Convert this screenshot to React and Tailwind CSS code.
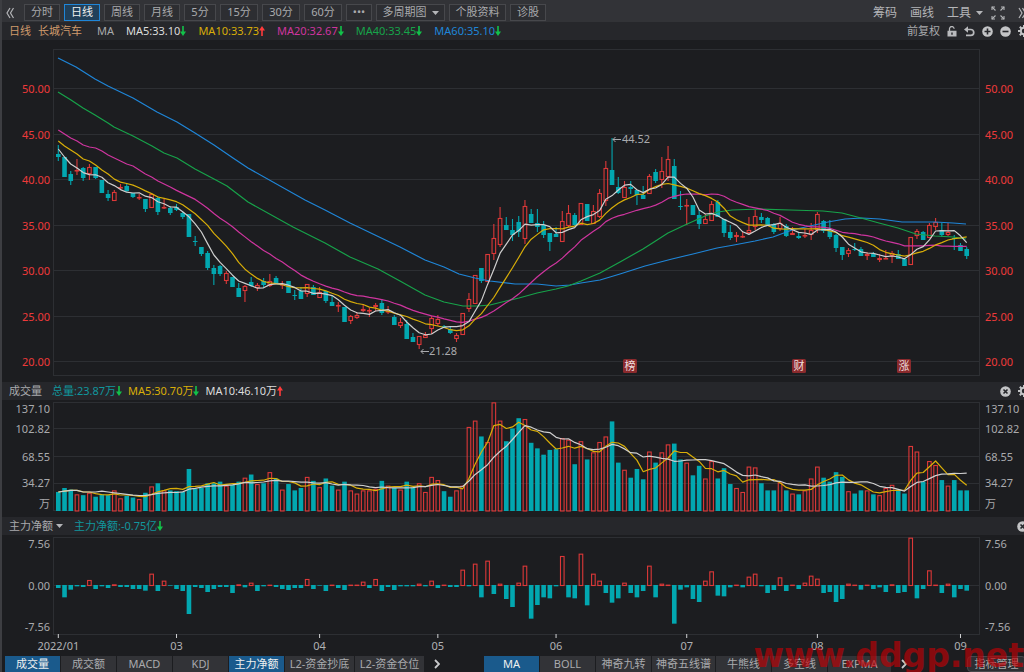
import React, { useState } from 'react';

// One candle per trading day: [high, body top, body bottom, low, direction], y in chart units
const candles = [
  [145, 154, 157, 161, 'd'], [157, 157, 177, 177, 'd'], [171, 174, 181, 185, 'd'], [159, 170, 171, 175, 'u'],
  [167, 168, 178, 181, 'd'], [164, 167, 174, 180, 'u'], [167, 167, 178, 179, 'd'], [180, 180, 193, 193, 'd'],
  [190, 194, 198, 201, 'd'], [190, 192, 201, 201, 'u'], [184, 187, 188, 190, 'u'], [184, 186, 191, 192, 'd'],
  [193, 193, 197, 198, 'd'], [194, 197, 198, 200, 'u'], [199, 199, 209, 212, 'd'], [193, 194, 208, 208, 'u'],
  [196, 198, 212, 215, 'd'], [199, 207, 208, 209, 'u'], [206, 208, 213, 215, 'd'], [204, 207, 210, 211, 'd'],
  [212, 213, 217, 219, 'd'], [214, 214, 237, 237, 'd'], [236, 241, 242, 246, 'd'], [247, 247, 254, 256, 'd'],
  [251, 253, 268, 270, 'd'], [265, 268, 274, 285, 'd'], [265, 266, 274, 276, 'd'], [271, 273, 281, 284, 'u'],
  [277, 277, 287, 287, 'd'], [283, 288, 297, 297, 'd'], [285, 286, 291, 302, 'u'], [277, 282, 286, 287, 'd'],
  [283, 285, 288, 291, 'u'], [278, 281, 285, 288, 'd'], [274, 281, 286, 287, 'u'], [276, 278, 283, 283, 'd'],
  [281, 284, 285, 289, 'u'], [281, 281, 293, 293, 'd'], [290, 295, 296, 300, 'd'], [287, 291, 299, 299, 'd'],
  [284, 284, 294, 297, 'u'], [285, 287, 295, 295, 'd'], [287, 292, 298, 298, 'u'], [291, 291, 301, 303, 'd'],
  [296, 302, 306, 306, 'd'], [302, 305, 306, 312, 'u'], [307, 307, 322, 322, 'd'], [315, 316, 321, 324, 'u'],
  [312, 315, 318, 319, 'u'], [304, 309, 311, 312, 'u'], [308, 310, 311, 317, 'u'], [303, 305, 307, 311, 'u'],
  [299, 303, 313, 315, 'd'], [306, 311, 312, 314, 'u'], [315, 317, 325, 325, 'd'], [318, 322, 326, 328, 'u'],
  [320, 324, 339, 339, 'd'], [333, 337, 342, 342, 'd'], [336, 336, 345, 349, 'u'], [332, 335, 338, 338, 'u'],
  [316, 318, 329, 334, 'u'], [315, 319, 324, 326, 'u'], [325, 326, 328, 328, 'd'], [326, 329, 333, 334, 'd'],
  [333, 335, 339, 342, 'u'], [313, 313, 335, 335, 'u'], [293, 299, 309, 312, 'u'], [275, 275, 304, 304, 'u'],
  [268, 268, 281, 283, 'd'], [254, 254, 282, 282, 'u'], [224, 238, 254, 260, 'u'], [207, 218, 245, 247, 'u'],
  [217, 225, 230, 230, 'd'], [219, 230, 235, 241, 'd'], [216, 222, 232, 237, 'd'], [200, 206, 239, 244, 'u'],
  [209, 214, 223, 223, 'd'], [209, 223, 227, 232, 'd'], [221, 225, 235, 238, 'd'], [233, 233, 242, 251, 'd'],
  [227, 234, 237, 237, 'd'], [211, 221, 242, 242, 'u'], [205, 213, 226, 227, 'u'], [213, 215, 225, 226, 'd'],
  [203, 203, 225, 225, 'u'], [204, 204, 221, 221, 'd'], [205, 211, 224, 224, 'u'], [189, 193, 217, 218, 'u'],
  [161, 168, 201, 206, 'u'], [138, 170, 185, 185, 'd'], [177, 187, 193, 194, 'd'], [181, 187, 198, 198, 'u'],
  [181, 187, 189, 194, 'd'], [190, 190, 195, 205, 'd'], [186, 195, 199, 199, 'd'], [174, 176, 194, 194, 'u'],
  [169, 172, 181, 183, 'd'], [157, 171, 180, 188, 'u'], [146, 159, 177, 181, 'u'], [159, 166, 199, 199, 'd'],
  [191, 206, 207, 210, 'd'], [199, 205, 206, 225, 'u'], [205, 205, 215, 215, 'd'], [210, 215, 224, 229, 'd'],
  [214, 219, 224, 224, 'u'], [201, 204, 221, 221, 'u'], [200, 202, 217, 217, 'd'], [219, 219, 233, 237, 'd'],
  [225, 232, 238, 240, 'd'], [232, 235, 237, 242, 'u'], [232, 236, 237, 238, 'u'], [217, 230, 233, 234, 'u'],
  [210, 216, 227, 230, 'u'], [213, 217, 220, 223, 'd'], [217, 218, 225, 225, 'd'], [223, 224, 232, 234, 'd'],
  [217, 223, 229, 231, 'u'], [224, 226, 236, 237, 'd'], [227, 233, 235, 235, 'u'], [232, 236, 238, 239, 'd'],
  [229, 235, 236, 238, 'u'], [223, 230, 235, 240, 'u'], [212, 214, 230, 233, 'u'], [220, 221, 231, 233, 'd'],
  [220, 231, 237, 239, 'd'], [234, 235, 248, 252, 'd'], [247, 247, 255, 260, 'd'], [248, 250, 254, 257, 'u'],
  [243, 249, 250, 251, 'd'], [247, 249, 256, 256, 'd'], [252, 254, 256, 260, 'u'], [252, 254, 257, 257, 'd'],
  [254, 258, 260, 262, 'u'], [250, 258, 259, 259, 'u'], [251, 253, 256, 263, 'u'], [250, 254, 259, 259, 'd'],
  [258, 259, 266, 266, 'd'], [237, 237, 265, 265, 'u'], [229, 231, 236, 239, 'u'], [231, 232, 240, 240, 'd'],
  [223, 225, 238, 238, 'u'], [218, 222, 227, 230, 'u'], [223, 230, 235, 237, 'd'], [223, 232, 235, 236, 'u'],
  [235, 238, 239, 250, 'd'], [243, 245, 251, 251, 'd'], [247, 249, 256, 259, 'd'],
];

// Daily volume
const volumes = [
  24, 29, 27, 21, 20, 23, 18, 21, 20, 26, 16, 19, 17, 15, 23, 31, 35, 26, 26, 25, 24, 53, 28, 29, 35, 35, 37, 32, 33, 37,
  42, 46, 34, 35, 49, 41, 27, 34, 26, 29, 43, 38, 30, 41, 32, 27, 37, 26, 22, 26, 26, 28, 38, 32, 29, 27, 37, 30, 35, 24,
  43, 39, 25, 18, 26, 32, 106, 114, 94, 87, 137, 114, 88, 104, 117, 116, 86, 79, 71, 77, 78, 92, 90, 59, 88, 65, 74, 87,
  94, 113, 61, 52, 42, 53, 40, 75, 61, 74, 84, 85, 65, 61, 45, 57, 41, 63, 41, 54, 34, 29, 24, 56, 55, 35, 26, 26, 36, 26,
  22, 21, 26, 41, 56, 42, 37, 49, 43, 25, 22, 26, 26, 21, 20, 29, 33, 27, 22, 82, 75, 37, 63, 58, 39, 32, 39, 26, 26,
];

// Net inflow of the main funds
const flows = [
  -9, -37, -14, -4, -6, 18, -12, -4, -9, 5, -6, -6, -12, -12, -17, 37, -18, 16, -2, -12, -18, -87, -6, -9, -21, -12, -6,
  -6, -24, 5, -7, 10, -18, -4, 2, -6, -12, -15, -9, -9, 21, -12, -2, -18, 4, -9, -15, 4, 4, 13, -9, 21, -18, -6, -15, -4,
  -4, -4, 7, -4, 16, -9, 4, -6, -6, 49, -4, 67, -37, 76, -27, 7, -42, -66, 10, 61, -101, -60, -37, -40, -4, 90, -37, -40,
  97, -61, 37, 16, -24, -53, -40, 10, -24, -37, -18, 61, -37, 7, 4, -116, -14, -7, -42, -51, 16, 44, -32, -34, -7, 4, -7,
  28, 37, -4, -24, -15, 26, -18, 2, -12, 10, 31, 22, -24, -21, -51, -42, 7, 2, -14, 2, -12, -7, -21, 5, -24, -21, 145,
  -40, -12, 47, 4, -24, 7, -37, -12, -17,
];

// Averages of the first days, where the series has no history of its own
const ma5Head = [149, 157, 164, 168];
const ma10Head = [141, 146, 150, 154, 159, 161, 165, 170, 174];
const ma20Head = [130, 134, 138, 141, 145, 147, 148, 151, 155, 158, 161, 164, 166, 170, 174, 177, 181, 184, 187];

const ma40Line =
  '58,92 71,100 83,108 95,115 108,123 114,127 133,136 152,146 164,153 177,158 195,169 214,179 227,186 248,202 293,227 307,234 325,243 350,257 378,269 400,281 425,295 444,302 463,306 478,306 490,305 506,301 519,298 537,293 556,289 568,286 581,281 600,273 620,262 643,249 654,242 668,233 685,225 705,216 718,212 732,210 760,209 790,210 823,211 842,213 861,218 879,223 898,228 916,234 935,236 953,237 966,239';
const ma60Line =
  '58,58 76,67 95,79 108,86 133,98 157,112 177,122 195,133 214,145 233,158 248,168 305,200 325,210 350,223 375,235 400,247 425,260 444,267 459,274 475,278 490,281 515,284 537,284 556,286 570,285 581,283 600,280 620,274 645,266 672,259 693,254 717,248 734,245 755,241 773,237 792,230 810,226 828,222 845,219 862,218 880,219 902,222 935,222 953,223 966,224';

const periods = [
  { name: '分时', width: 'w-9' },
  { name: '日线', width: 'w-9' },
  { name: '周线', width: 'w-9' },
  { name: '月线', width: 'w-9' },
  { name: '5分', width: 'w-8' },
  { name: '15分', width: 'w-[38px]' },
  { name: '30分', width: 'w-[38px]' },
  { name: '60分', width: 'w-[38px]' },
  { name: '•••', width: 'w-[26px]' },
  { name: '多周期图', width: 'w-[69px]', menu: true },
  { name: '个股资料', width: 'w-[57px]' },
  { name: '诊股', width: 'w-9' },
];

const months = [
  [0, '2022/01'], [19, '03'], [42, '04'], [61, '05'], [80, '06'], [101, '07'], [122, '08'], [145, '09'],
];

const priceLabels = ['50.00', '45.00', '40.00', '35.00', '30.00', '25.00', '20.00'];
const volumeLabels = ['137.10', '102.82', '68.55', '34.27', '万'];
const flowLabels = ['7.56', '0.00', '-7.56'];

const RED = '#dc3838';
const TEAL = '#02a7b0';

const dayX = (i) => 58.3 + i * 6.222;
const volumeY = (v) => 511 - v * 0.793;

// Moving average over n days
const average = (values, n, head) =>
  values.map((_, i) => {
    if (i < n - 1) return head[i];
    return values.slice(i - n + 1, i + 1).reduce((a, b) => a + b, 0) / n;
  });

const toPoints = (ys) => ys.map((y, i) => `${dayX(i).toFixed(1)},${y.toFixed(1)}`).join(' ');

const closes = candles.map((c) => (c[4] === 'u' ? c[1] : c[2]));
const volumeHead = [24, 25, 26, 26, 24, 24, 24, 25, 24];

function Arrow({ up }) {
  return (
    <svg width="6" height="10" viewBox="0 0 6 10" className="shrink-0">
      {up ? (
        <path d="M2.2 10V4.5H0L3 0l3 4.5H3.8V10z" fill="#ff3b3b" />
      ) : (
        <path d="M2.2 0v5.5H0L3 10l3-4.5H3.8V0z" fill="#12c24a" />
      )}
    </svg>
  );
}

function Caret() {
  return (
    <svg width="7" height="4" viewBox="0 0 7 4" className="shrink-0">
      <path d="M0 0h7L3.5 4z" fill="#b4b5b8" />
    </svg>
  );
}

function Chevrons({ left }) {
  return (
    <svg width="8" height="12" viewBox="0 0 8 12" fill="none" stroke="#b4b5b8" strokeWidth="1.2">
      <path d={left ? 'M4 1L1 6l3 5M7.500 1l-3 5 3 5' : 'M1 1l3 5-3 5M4.500 1l3 5-3 5'} />
    </svg>
  );
}

function Next() {
  return (
    <svg width="6" height="10" viewBox="0 0 6 10" fill="none" stroke="#c9cacc" strokeWidth="1.8">
      <path d="M1 1l4 4-4 4" />
    </svg>
  );
}

function Expand() {
  return (
    <svg width="14" height="14" viewBox="0 0 14 14" fill="none" stroke="#b4b5b8" strokeWidth="1.1">
      <path d="M1 4V1h3M10 1h3v3M13 10v3h-3M4 13H1v-3" />
      <path d="M1 1l3.500 3.500M13 1L9.500 4.500M13 13L9.500 9.500M1 13l3.500-3.500" />
    </svg>
  );
}

function Lock() {
  return (
    <svg width="10" height="11" viewBox="0 0 10 11">
      <path d="M2.500 5V3a2.300 2.300 0 0 1 4.600-.3" fill="none" stroke="#b9babd" strokeWidth="1.300" />
      <path d="M.5 4.800h9V10.500h-9zM4.300 6.600v2.200h1.400V6.600z" fill="#b9babd" fillRule="evenodd" />
    </svg>
  );
}

function Undo() {
  return (
    <svg width="11" height="11" viewBox="0 0 11 11">
      <path d="M2.500 3.500h4.300a2.900 2.900 0 0 1 0 5.900H2" fill="none" stroke="#b9babd" strokeWidth="1.700" />
      <path d="M0 3.500L4 .3v6.400z" fill="#b9babd" />
    </svg>
  );
}

function Round({ d }) {
  return (
    <svg width="11" height="11" viewBox="0 0 11 11">
      <circle cx="5.500" cy="5.500" r="5.300" fill="#c3c4c6" />
      <path d={d} fill="none" stroke="#26272b" strokeWidth="1.600" />
    </svg>
  );
}

function Gear() {
  return (
    <svg width="12" height="12" viewBox="0 0 12 12" fill="none" stroke="#c3c4c6">
      <circle cx="6" cy="6" r="3.200" strokeWidth="2" />
      <path
        d="M6 0v2.500M6 9.500V12M0 6h2.500M9.500 6H12M1.800 1.800l1.700 1.700M8.500 8.500l1.700 1.700M10.200 1.800L8.500 3.500M3.500 8.500l-1.700 1.700"
        strokeWidth="2"
      />
    </svg>
  );
}

function IconButton({ label, children }) {
  return (
    <button type="button" aria-label={label} className="flex shrink-0 items-center">
      {children}
    </button>
  );
}

function Reading({ color, up, children }) {
  return (
    <span className={`flex items-center ${color}`}>
      {children}
      <Arrow up={up} />
    </span>
  );
}

function Line({ points, color }) {
  return <polyline points={points} fill="none" stroke={color} strokeWidth="1.2" strokeLinejoin="round" />;
}

function Tag({ x, children }) {
  return (
    <g>
      <rect x={x - 7} y="359" width="14" height="14" rx="1.500" fill="#8a2a2d" />
      <text x={x} y="370" textAnchor="middle" fontSize="11" fill="#f0dede">{children}</text>
    </g>
  );
}

function PriceChart() {
  return (
    <svg viewBox="53 40 927 342" preserveAspectRatio="none" className="h-[342px] min-w-0 flex-1">
      <rect x="53.5" y="49.5" width="926" height="326" fill="none" stroke="#2d2f33" />
      {priceLabels.map((label, i) => (
        <path key={label} d={`M54 ${88.5 + Math.round(i * 45.5)}h925`} stroke="#2d2f33" />
      ))}
      {candles.map(([high, top, bottom, low, dir], i) => {
        const x = dayX(i);
        const h = Math.max(bottom - top, 1);
        return dir === 'u' ? (
          <g key={i} stroke={RED} strokeWidth="1.1" fill="none">
            <path d={`M${x} ${high}V${top}M${x} ${bottom}V${low}`} />
            <rect x={x - 1.8} y={top + 0.5} width="3.6" height={Math.max(h - 1, 0.5)} />
          </g>
        ) : (
          <g key={i} fill={TEAL}>
            <path d={`M${x} ${high}V${low}`} stroke={TEAL} strokeWidth="1.1" />
            <rect x={x - 2.3} y={top} width="4.6" height={h} />
          </g>
        );
      })}
      <Line points={ma60Line} color="#1f86d8" />
      <Line points={ma40Line} color="#17a34a" />
      <Line points={toPoints(average(closes, 20, ma20Head))} color="#cf359f" />
      <Line points={toPoints(average(closes, 10, ma10Head))} color="#d9ae08" />
      <Line points={toPoints(average(closes, 5, ma5Head))} color="#cfcfcf" />
      <g fill="#a9aaad" stroke="none" fontSize="11">
        <path d="M613 139.500h8M615.500 137l-2.500 2.500 2.500 2.500M421 351.500h8M423.500 349l-2.500 2.500 2.500 2.500" fill="none" stroke="#a9aaad" />
        <text x="622" y="143">44.52</text>
        <text x="429" y="355">21.28</text>
      </g>
      <Tag x={630}>榜</Tag>
      <Tag x={799}>财</Tag>
      <Tag x={904}>涨</Tag>
    </svg>
  );
}

function VolumeChart() {
  return (
    <svg viewBox="53 400 927 117" preserveAspectRatio="none" className="h-[117px] min-w-0 flex-1">
      <rect x="53.5" y="402.5" width="926" height="108" fill="none" stroke="#2d2f33" />
      <path d="M54 428.500h925M54 456.500h925M54 483.500h925" stroke="#2d2f33" />
      {volumes.map((v, i) => {
        const x = dayX(i);
        const y = volumeY(v);
        return candles[i][4] === 'u' ? (
          <rect key={i} x={x - 1.8} y={y + 0.5} width="3.6" height={510.5 - y} fill="none" stroke={RED} strokeWidth="1.1" />
        ) : (
          <rect key={i} x={x - 2.3} y={y} width="4.6" height={511 - y} fill={TEAL} />
        );
      })}
      <Line points={toPoints(average(volumes, 5, volumeHead).map(volumeY))} color="#d9ae08" />
      <Line points={toPoints(average(volumes, 10, volumeHead).map(volumeY))} color="#cfcfcf" />
    </svg>
  );
}

function FlowChart() {
  return (
    <svg viewBox="53 535 927 120" preserveAspectRatio="none" className="h-[120px] min-w-0 flex-1 overflow-visible">
      <rect x="53.5" y="537.5" width="926" height="97" fill="none" stroke="#2d2f33" />
      <path d="M54 585.500h925" stroke="#2d2f33" />
      {flows.map((v, i) => {
        const x = dayX(i);
        return v > 0 ? (
          <rect key={i} x={x - 1.8} y={585.5 - Math.max(v / 3 - 1, 0.3)} width="3.6" height={Math.max(v / 3 - 1, 0.3)} fill="none" stroke={RED} strokeWidth="1.1" />
        ) : (
          <rect key={i} x={x - 2.3} y="585" width="4.6" height={-v / 3} fill={TEAL} />
        );
      })}
      {months.map(([i, name]) => (
        <g key={name}>
          <path d={`M${dayX(i)} 634v4`} stroke="#d0d1d3" />
          <text x={dayX(i)} y="650" textAnchor="middle" fontSize="11" fill="#b0b1b4">{name}</text>
        </g>
      ))}
    </svg>
  );
}

function Axis({ labels, right, className }) {
  return (
    <div className={`shrink-0 leading-4 ${right ? 'w-11 pl-[5px] text-left' : 'w-[51px] pr-[3px] text-right'} ${className}`}>
      {labels.map((label) => (
        <div key={label}>{label}</div>
      ))}
    </div>
  );
}

function Tab({ name, width, active, onClick }) {
  return (
    <button
      type="button"
      onClick={onClick}
      className={`h-4 shrink-0 whitespace-nowrap ${width} ${active ? 'bg-[#1a5a8c] text-[#f0f0f0]' : 'bg-[#323337] text-[#a9aaad]'}`}
    >
      {name}
    </button>
  );
}

const lowerTabs = [
  ['成交量', 'w-[55px]'], ['成交额', 'w-[55px]'], ['MACD', 'w-[55px]'], ['KDJ', 'w-[55px]'], ['主力净额', 'w-[55px]'],
  ['L2-资金抄底', 'w-[69px]'], ['L2-资金仓位', 'w-[69px]'],
];
const upperTabs = [
  ['MA', 'w-[55px]'], ['BOLL', 'w-[55px]'], ['神奇九转', 'w-[55px]'], ['神奇五线谱', 'w-[63px]'], ['牛熊线', 'w-[55px]'],
  ['多空线', 'w-[55px]'], ['EXPMA', 'w-[63px]'],
];

function App() {
  const [period, setPeriod] = useState('日线');
  const [shown, setShown] = useState(['成交量', '主力净额']);
  const [overlay, setOverlay] = useState('MA');

  const toggleShown = (name) => {
    setShown(shown.includes(name) ? shown.filter((n) => n !== name) : [...shown, name]);
  };

  return (
    <div className="relative w-full overflow-hidden border-l-2 border-[#3d3e42] bg-[#1c1d20] font-['Noto_Sans','Noto_Sans_CJK_SC',sans-serif] text-[11px] text-[#a9aaad]">
      {/* Period toolbar */}
      <header className="flex h-[22px] items-center justify-between bg-[#323337] pt-[3px] pl-1">
        <div className="flex items-center gap-1">
          <div className="flex w-[14px] items-center">
            <IconButton label="收起"><Chevrons left /></IconButton>
          </div>
          {periods.map(({ name, width, menu }) => (
            <button
              key={name}
              type="button"
              onClick={() => setPeriod(name)}
              className={`flex h-[17px] shrink-0 items-center justify-center gap-[5px] border whitespace-nowrap ${width} ${
                period === name ? 'border-[#1f86d8] bg-[#21405a] text-[#f0f0f0]' : 'border-[#47484c] bg-[#2d2e32]'
              }`}
            >
              {name}
              {menu && <Caret />}
            </button>
          ))}
        </div>
        <div className="-mr-0.5 flex shrink-0 items-center gap-[13px] text-xs text-[#b4b5b8]">
          <button type="button">筹码</button>
          <button type="button">画线</button>
          <div className="flex items-center gap-2">
            <button type="button" className="flex items-center gap-[5px]">工具<Caret /></button>
            <IconButton label="全屏"><Expand /></IconButton>
          </div>
          <IconButton label="展开"><Chevrons /></IconButton>
        </div>
      </header>

      {/* Price chart */}
      <div className="flex h-[18px] items-center justify-between bg-[#26272b] pl-[7px]">
        <div className="flex items-center gap-3 whitespace-nowrap">
          <div className="flex gap-[7px] text-[#cf9a6b]">
            <span>日线</span>
            <span>长城汽车</span>
          </div>
          <span className="pl-[3px]">MA</span>
          <Reading color="text-[#dcdcdc]">MA5:33.10</Reading>
          <Reading color="text-[#d9ae08]" up>MA10:33.73</Reading>
          <Reading color="text-[#cf359f]">MA20:32.67</Reading>
          <Reading color="text-[#17a34a]">MA40:33.45</Reading>
          <Reading color="text-[#1f86d8]">MA60:35.10</Reading>
        </div>
        <div className="-mr-1.5 flex shrink-0 items-center gap-[7px]">
          <button type="button">前复权</button>
          <IconButton label="锁定"><Lock /></IconButton>
          <IconButton label="撤销"><Undo /></IconButton>
          <IconButton label="放大"><Round d="M5.500 2.500v6M2.500 5.500h6" /></IconButton>
          <IconButton label="缩小"><Round d="M2.500 5.500h6" /></IconButton>
          <IconButton label="设置"><Gear /></IconButton>
        </div>
      </div>
      <section className="flex">
        <Axis labels={priceLabels} className="flex flex-col justify-between pt-[41px] pb-3 text-[#ee3a3a]" />
        <PriceChart />
        <Axis labels={priceLabels} right className="flex flex-col justify-between pt-[41px] pb-3 text-[#ee3a3a]" />
      </section>

      {/* Volume */}
      <div className="flex h-[18px] items-center justify-between bg-[#26272b] pl-[7px]">
        <div className="flex items-center gap-1.5 whitespace-nowrap">
          <span className="pr-1">成交量</span>
          <Reading color="text-[#11969d]">总量:23.87万</Reading>
          <Reading color="text-[#d9ae08]">MA5:30.70万</Reading>
          <Reading color="text-[#dcdcdc]" up>MA10:46.10万</Reading>
        </div>
        <div className="-mr-1.5 flex items-center gap-[7px]">
          <IconButton label="关闭成交量"><Round d="M3.500 3.500l4 4M7.500 3.500l-4 4" /></IconButton>
          <IconButton label="成交量设置"><Gear /></IconButton>
        </div>
      </div>
      <section className="flex">
        <Axis labels={volumeLabels} className="grid grid-rows-[16px_24px_31px_22px_20px] content-start items-center pt-px" />
        <VolumeChart />
        <Axis labels={volumeLabels} right className="grid grid-rows-[16px_24px_31px_22px_20px] content-start items-center pt-px" />
      </section>

      {/* Main funds flow */}
      <div className="flex h-[18px] items-center justify-between bg-[#26272b] pl-[7px]">
        <div className="flex items-center gap-[11px] whitespace-nowrap">
          <button type="button" className="flex items-center gap-[3px]">主力净额<Caret /></button>
          <Reading color="text-[#11969d]">主力净额:-0.75亿</Reading>
        </div>
        <div className="-mr-1 flex items-center">
          <IconButton label="关闭主力净额"><Round d="M3.500 3.500l4 4M7.500 3.500l-4 4" /></IconButton>
        </div>
      </div>
      <section className="flex">
        <Axis labels={flowLabels} className="flex flex-col justify-between pt-px pb-5" />
        <FlowChart />
        <Axis labels={flowLabels} right className="flex flex-col justify-between pt-px pb-5" />
      </section>

      {/* Indicator tabs */}
      <nav className="flex h-[17px] items-center justify-between pl-[3px]">
        <div className="flex shrink-0 items-center gap-px">
          {lowerTabs.map(([name, width]) => (
            <Tab key={name} name={name} width={width} active={shown.includes(name)} onClick={() => toggleShown(name)} />
          ))}
          <div className="flex w-[58px] items-center pl-[9px]">
            <IconButton label="更多副图指标"><Next /></IconButton>
          </div>
          {upperTabs.map(([name, width]) => (
            <Tab key={name} name={name} width={width} active={overlay === name} onClick={() => setOverlay(name)} />
          ))}
          <div className="flex items-center pl-[9px]">
            <IconButton label="更多主图指标"><Next /></IconButton>
          </div>
        </div>
        <button type="button" className="-mr-0.5 h-4 w-[59px] shrink-0 rounded-sm border border-[#47484c] bg-[#2d2e32] leading-none whitespace-nowrap">
          指标管理
        </button>
      </nav>

      <div className="pointer-events-none absolute right-0 -bottom-1 font-['DejaVu_Sans',sans-serif] text-[33px] leading-[40px] font-bold text-[#c00004]/65">
        www.ddgp.net
      </div>
    </div>
  );
}

export default App;
